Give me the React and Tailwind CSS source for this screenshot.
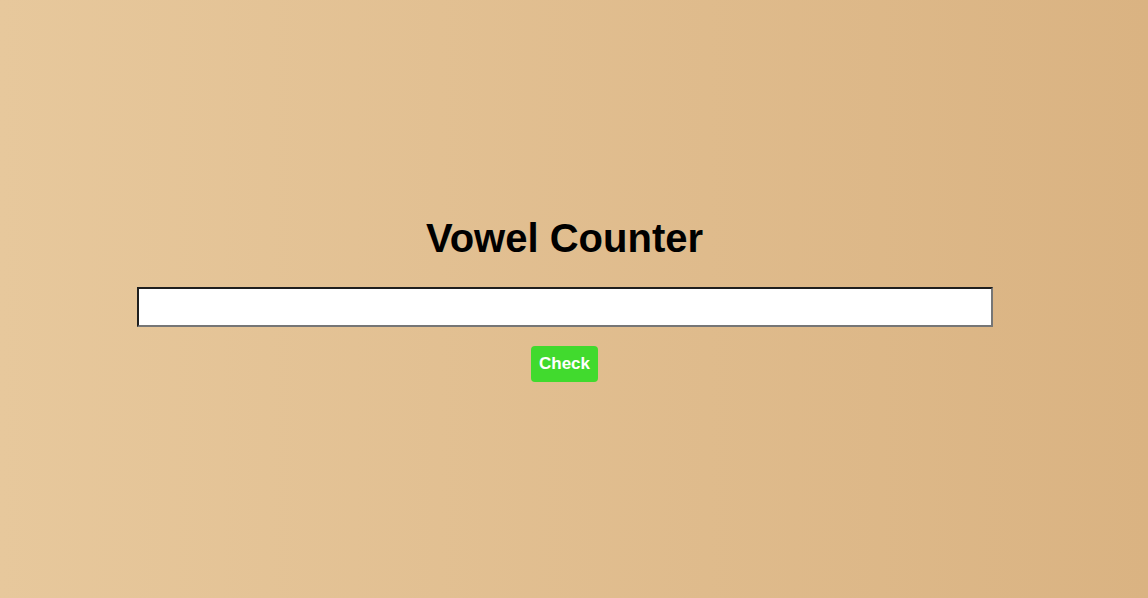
import { useState } from "react";

const App = () => {
  const [text, setText] = useState("");

  return (
    <div className="min-h-screen w-full bg-gradient-to-r from-[#e7c89c] to-[#dab382] flex flex-col items-center justify-center pr-[19px] pb-[2px] font-['Liberation_Sans',Arial,sans-serif]">
      <h1 className="text-[40px] leading-[46px] font-bold text-black mb-[26px]">
        Vowel Counter
      </h1>

      <input
        value={text}
        onChange={(e) => setText(e.target.value)}
        className="w-[856px] h-[40px] bg-white border-2 border-t-[#1f1f1f] border-l-[#1f1f1f] border-b-[#767676] border-r-[#767676] px-2 text-base outline-none mb-[19px]"
      />

      <button className="h-[36px] px-2 rounded bg-[#41da2e] text-white text-[17px] font-bold leading-5">
        Check
      </button>
    </div>
  );
};

export default App;
